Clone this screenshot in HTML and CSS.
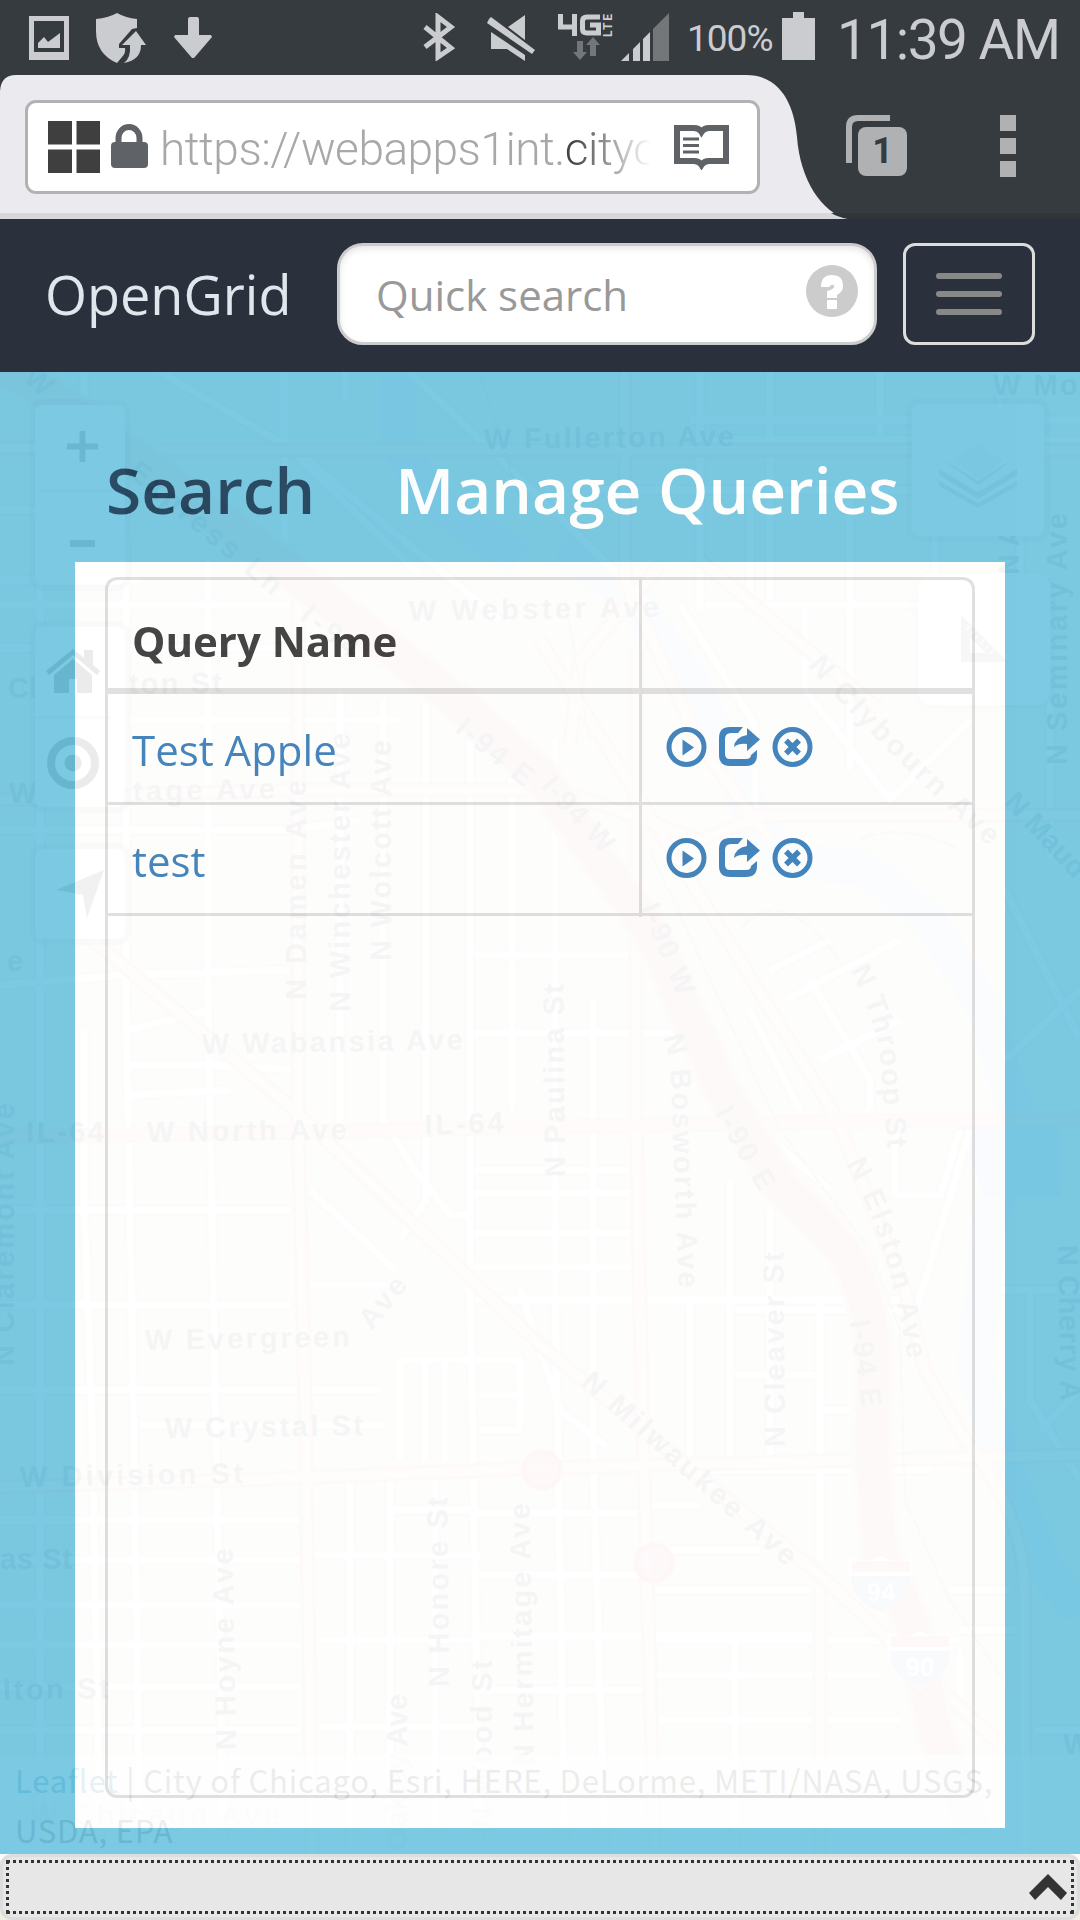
FILE: index.html
```html
<!DOCTYPE html>
<html lang="en">
<head>
<meta charset="utf-8">
<title>OpenGrid</title>
<link rel="stylesheet" href="styles.css">
</head>
<body>
<header class="status">
  <div class="status-left">
    <svg width="40" height="44" viewBox="0 0 40 44" fill="#cacccf"><path fill-rule="evenodd" d="M0 0H40V44H0ZM5 5V36H35V5Z"/><path d="M9 32V27L15 21 19 26 31 17V32Z"/></svg>
    <svg class="shield" width="50" height="50" viewBox="0 0 50 50" fill="#cacccf"><path d="M0 6Q12 5 21 0 30 5 41 6V15L36 16 23 31V35H29Q30 40 26 44L21 50Q0 41 0 18Z"/><path d="M40 18 50 32H45Q45 47 28 50 35 45 34 32H26Z"/></svg>
    <svg class="down" width="38" height="42" viewBox="0 0 38 42" fill="#cacccf"><path d="M16 0H23Q25 0 25 3V18H37L38 20 20 41H18L0 20 1 18H14V3Q14 0 16 0Z"/></svg>
  </div>
  <div class="status-right">
    <svg width="33" height="48" viewBox="0 0 33 48" fill="none" stroke="#cacccf" stroke-width="5"><path d="M2 14 28 35 15 44V4L28 14 2 34"/></svg>
    <svg class="mute" width="48" height="46" viewBox="0 0 48 46" fill="#cacccf"><path d="M2 4 4 2 48 35 45 39 0 8ZM38 0V25L21 12ZM4 17 38 40V46L20 34H4Z"/></svg>
    <svg class="lte" width="55" height="48" viewBox="0 0 55 48"><path fill="none" stroke="#cacccf" stroke-width="5" d="M2.500 1V14H17M16.500 1V23M42 4H29Q24.500 4 24.500 8V16Q24.500 20 29 20H40.500V12H32"/><text class="lte-text" transform="translate(54 24) rotate(-90)" textLength="23">LTE</text><path fill="#73777a" d="M19 28H25V39H29L22 47 15 39H19ZM32 43H38V32H42L35 24 28 32H32Z"/></svg>
    <svg class="signal" width="49" height="48" viewBox="0 0 49 48"><path fill="#cacccf" d="M0 48 8 40V48ZM12 36 19 29V48H12ZM22 26 29 19V48H22Z"/><path fill="#73777a" d="M32 16 48 0V48H32Z"/></svg>
    <span class="percent">100%</span>
    <svg class="battery" width="33" height="48" viewBox="0 0 33 48" fill="#cacccf"><path d="M11 0H22V6H33V48H0V6H11Z"/></svg>
    <time>11:39 AM</time>
  </div>
</header>
<div class="browser">
  <svg class="tab-shape" width="1080" height="144" viewBox="0 0 1080 144"><path fill="#ebeaef" d="M0 16Q1 0 16 0H746C785 0 795 38 797 62C800 105 822 138 848 144H0Z"/><path fill="#d8d7dc" d="M0 138H831Q838 142 848 144H0Z"/><path fill="#30353a" d="M831 138H1080V144H848Q838 142 831 138Z"/></svg>
  <div class="url">
    <svg width="52" height="52" viewBox="0 0 52 52" fill="#3f3f3f"><path d="M0 0H24V23.500H0ZM28.500 0H52V23.500H28.500ZM0 28.500H24V52H0ZM28.500 28.500H52V52H28.500Z"/></svg>
    <svg class="lock" width="37" height="44" viewBox="0 0 37 44"><rect y="18" width="37" height="26" rx="4" fill="#5f6368"/><path d="M7.500 20V14A10.500 11 0 0 1 28.500 14V20" fill="none" stroke="#5f6368" stroke-width="6"/></svg>
    <div class="address">https://webapps1int.<span>cityc</span></div>
    <svg width="55" height="45" viewBox="0 0 55 45"><path d="M3 3H20Q25 3 27.500 7 30 3 35 3H52V36H35Q30 36 27.500 40 25 36 20 36H3Z" fill="none" stroke="#5f6368" stroke-width="6"/><path d="M9 14H25M9 20.500H25M9 27H25" stroke="#5f6368" stroke-width="3"/></svg>
  </div>
  <div class="tabs"><svg width="61" height="61" viewBox="0 0 61 61"><path d="M3 48V12Q3 3 12 3H44" fill="none" stroke="#afb1b3" stroke-width="6"/><rect x="12" y="12" width="49" height="49" rx="8" fill="#afb1b3"/></svg><span>1</span></div>
  <div class="dots"><i></i><i></i><i></i></div>
</div>
<nav class="navbar">
  <div class="brand">OpenGrid</div>
  <div class="search"><span>Quick search</span><svg width="52" height="52" viewBox="0 0 52 52"><circle cx="26" cy="26" r="26" fill="#ccc"/><path d="M15 22Q15 10 26 10 37 10 37 21 37 27 31 30V33H21V26Q29 24 28 20.500 27 19 24 21L23 22ZM22 35H30Q31 35 31 36V43Q31 44 30 44H22Q21 44 21 43V36Q21 35 22 35Z" fill="#fff"/></svg></div>
  <button class="toggle" aria-label="Menu"><i></i><i></i><i></i></button>
</nav>
<main>
  <svg class="map" width="1080" height="1548" viewBox="0 372 1080 1548">
    <defs>
      <path id="streets" d="M40 372V1855M84 372V530M84 1030V1200L92 1420 100 1855M126 540V1000L132 1320 140 1855M208 560V1000L215 1380 224 1855M340 690V1120M383 700V1120L415 1170 450 1215H472M426 690V1200L400 1240M470 700V1280L480 1855M512 720V1110M555 740V1290L565 1855M593 1000V1460L605 1855M285 372V560M285 445 420 575M283 372V440L500 620M160 372 285 445M345 372V400M410 372 650 605M700 372V610M770 372V600M690 420H1080M700 372V440H1080M880 372V455M935 455V620M590 490H920M705 605H1000M700 500V605M750 500V605M850 500V770M805 605V690L890 800 970 720M680 605 755 725V810M0 510H120M0 580H140M0 605H290M0 648H280M128 720H400M0 830H290L360 820M0 985 125 975 290 970M130 1030 210 1010M130 1065H210L300 1070M130 1095 230 1090M0 1210H290M0 1305H290M0 1390H380M140 1425H385M0 1520H300M0 1560H300M0 1605H300M0 1645H300M0 1687H300M0 1730H300M310 1190 395 1270M310 1285H385M400 1360H520V1430M400 1360V1460M425 1360V1460M445 1360V1460M480 1395H520M480 1430H520M350 1480V1855M390 1480V1855M435 1480V1855M390 1510H475M310 1555H480M320 1640H480M320 1727H475M470 1130V1280M475 1170H630M475 1193H630M475 1233H630M475 1267H630M475 1300H900M475 1470H930M475 1513H640M475 1575H640M475 1636H820M475 1690H645M650 1505H700M650 1550H760M650 1590H810M650 1640H960M650 1675H880M650 1720H900M735 1640V1855M690 1300V1460M730 1180V1460M770 1210V1460M820 1300V1560M475 1033H690M475 955H630M520 1290 560 1410 605 1445M735 1375H815M820 1410H850M735 1310H900M770 970 830 940M785 1000 900 940M820 1060 900 1020M750 1010 800 1110M810 980 870 1080V1110M895 1130V1195H940L960 1130M970 1130 910 1330M830 1190 760 1130M1000 372V460M1020 460V640M1050 700V860M1005 890 1080 1040M1005 1060 1080 990M1000 1290H1080M1030 1290V1400L1080 1480M1040 1430 1080 1390M900 1600 940 1640M950 1590H1010M960 1630H1015M960 1650V1700M1035 1730H1080"/>
      <path id="arterials" d="M0 448H120M160 450H1080M0 800 290 790H560L700 840 765 815H1080M0 1137 300 1132 540 1127 1080 1118M0 1487 240 1480 540 1468 1080 1455M298 560 298 1120 305 1400 312 1855M636 650V1120L642 1400 655 1855M75 925 300 1115 540 1345 820 1575 1000 1745M660 565 580 660 570 745M540 640 740 960 835 1115 865 1190 905 1290 925 1370 965 1440Q1025 1510 1025 1600V1855M625 372V580L700 745 770 840M700 560 880 710M820 1590V1855M0 372 280 575"/>
      <path id="freeway" d="M0 360 130 455 280 565 447 693 540 775 585 840 650 930 722 1090 780 1185 840 1245Q876 1300 874 1380L872 1460 880 1550 912 1623 936 1735 975 1830"/>
    </defs>
    <rect y="372" width="1080" height="1548" fill="#f3efe0"/>
    <g fill="#ebf0d8"><path d="M92 1255H120V1310H92ZM242 1310H295V1350H242ZM310 1280 350 1240 385 1275ZM398 1480H430V1535H398ZM600 1040H635V1100H600ZM572 1640H640V1680H572ZM735 1200H765V1280H735ZM830 1720H900V1765H830ZM145 1630H200V1645H145ZM735 1345H810V1370H735Z"/></g>
    <g fill="none" stroke="#d6e1f8" stroke-width="36" stroke-linejoin="round"><path d="M398 372V440L430 500 520 560"/><path d="M560 550 630 595 690 680 740 790 780 860 865 868 930 920 985 1010 1015 1110 1000 1180 988 1230 975 1370 1005 1470 1045 1570 1080 1610"/><path stroke="none" fill="#cfdcf6" d="M955 1122H1060V1197H985Z"/></g>
    <use href="#streets" fill="none" stroke="#e3e1d8" stroke-width="12"/>
    <use href="#streets" fill="none" stroke="#fff" stroke-width="7"/>
    <use href="#arterials" fill="none" stroke="#f0cfc4" stroke-width="15"/>
    <use href="#arterials" fill="none" stroke="#fbf3ea" stroke-width="9"/>
    <path d="M0 1137 300 1132 540 1127 1080 1118" fill="none" stroke="#f9d8d0" stroke-width="12"/>
    <use href="#freeway" fill="none" stroke="#f5e0d8" stroke-width="42"/>
    <use href="#freeway" fill="none" stroke="#f2c9be" stroke-width="33"/>
    <path d="M650 850 710 980 780 1130 870 1250 900 1330 905 1500 950 1600 1010 1690M860 840Q900 820 960 850M740 930Q780 880 840 960M480 372 520 500M565 600 590 740M660 930 720 1040" fill="none" stroke="#d3d2cc" stroke-width="2" stroke-dasharray="18 3"/>
    <g class="labels">
      <text x="0" y="0" transform="translate(22 380) rotate(40)">W</text>
      <text transform="translate(484 449) rotate(-.7)" textLength="250">W Fullerton Ave</text>
      <text x="993" y="395" textLength="135">W Monta</text>
      <text transform="translate(409 621) rotate(-1)" textLength="250">W Webster Ave</text>
      <text x="8" y="698">Cl</text><text transform="translate(129 694) rotate(-1)" textLength="93">ton St</text>
      <text x="9" y="803">W</text><text transform="translate(133 801) rotate(-1)" textLength="142">tage Ave</text>
      <text transform="translate(306 1000) rotate(-90)" textLength="220">N Damen Ave</text>
      <text transform="translate(350 1012) rotate(-90)" textLength="279">N Winchester Ave</text>
      <text transform="translate(391 961) rotate(-90)" textLength="221">N Wolcott Ave</text>
      <text transform="translate(202 1054) rotate(-1)" textLength="261">W Wabansia Ave</text>
      <text x="26" y="1142" textLength="78">IL-64</text>
      <text transform="translate(147 1142) rotate(-.8)" textLength="200">W North Ave</text>
      <text transform="translate(425 1135) rotate(-2)" textLength="79">IL-64</text>
      <text transform="translate(372 1331) rotate(-51)" textLength="58">Ave</text>
      <text transform="translate(145 1350) rotate(-1)" textLength="205">W Evergreen</text>
      <text transform="translate(165 1438) rotate(-.8)" textLength="198">W Crystal St</text>
      <text transform="translate(20 1487) rotate(-1)" textLength="223">W Division St</text>
      <text x="0" y="1569" textLength="72">as St</text><text transform="translate(3 1700) rotate(-1)" textLength="106">lton St</text>
      <text transform="translate(236 1750) rotate(-91)" textLength="202">N Hoyne Ave</text>
      <text transform="translate(449 1687) rotate(-90.500)" textLength="190">N Honore St</text>
      <text transform="translate(534 1765) rotate(-91)" textLength="262">N Hermitage Ave</text>
      <text transform="translate(492 1828) rotate(-90)" textLength="168">N Wood St</text>
      <text transform="translate(407 1850) rotate(-90)" textLength="156">Oakley Ave</text>
      <text transform="translate(785 1447) rotate(-90.500)" textLength="195">N Cleaver St</text>
      <text transform="translate(565 1177) rotate(-90.500)" textLength="193">N Paulina St</text>
      <text transform="translate(14 1366) rotate(-90)" textLength="263">N Claremont Ave</text>
      <path id="bosworth" d="M663 1037Q672 1060 672 1110L679 1290" fill="none"/><text><textPath href="#bosworth" textLength="252">N Bosworth Ave</textPath></text>
      <path id="throop" d="M850 970Q882 1030 882 1085L888 1152" fill="none"/><text><textPath href="#throop" textLength="184">N Throop St</textPath></text>
      <path id="elston" d="M846 1164Q888 1235 908 1362" fill="none"/><text><textPath href="#elston" textLength="206">N Elston Ave</textPath></text>
      <path id="milwaukee" d="M580 1384 790 1570" fill="none"/><text><textPath href="#milwaukee" textLength="276">N Milwaukee Ave</textPath></text>
      <path id="clybourn" d="M808 666Q870 738 992 849" fill="none"/><text><textPath href="#clybourn" textLength="256">N Clybourn Ave</textPath></text>
      <text transform="translate(1003 803) rotate(47)">N Maud Ave</text>
      <text transform="translate(1067 765) rotate(-90)" textLength="252">N Seminary Ave</text>
      <text transform="translate(1019 575) rotate(-90)">N A</text>
      <text transform="translate(1058 1245) rotate(89)" textLength="156">N Cherry A</text>
      <text transform="translate(299 618) rotate(39)" textLength="65">I-94</text>
      <text transform="translate(454 731) rotate(39)" textLength="90">I-94 E</text>
      <text transform="translate(540 787) rotate(47)" textLength="92">I-94 W</text>
      <text transform="translate(640 908) rotate(67)" textLength="97">I-90 W</text>
      <text transform="translate(714 1113) rotate(60)" textLength="92">I-90 E</text>
      <text transform="translate(850 1321) rotate(82)" textLength="88">I-94 E</text>
      <text transform="translate(127 474) rotate(40)" textLength="190">Express Ln</text>
      <text x="7" y="971">e</text><text x="1063" y="1754">W</text>
      <text class="faint" x="30" y="1825" textLength="250">W Chicago Ave</text>
    </g>
    <g fill="#ffb8c4" fill-opacity=".8" stroke="#ffa8b8" stroke-width="5"><circle cx="542" cy="1470" r="18"/><circle cx="654" cy="1563" r="18"/></g>
    <g id="shield94"><path d="M849 1557Q866 1565 881 1556 897 1565 911 1557Q920 1593 881 1615 842 1593 849 1557Z" fill="#fff"/><path d="M852 1561H910V1572H852Z" fill="#f9b9bd"/><path d="M851 1576H911Q912 1600 881 1613 850 1600 851 1576Z" fill="#b9cde6"/></g>
    <use href="#shield94" x="39" y="75"/>
    <g class="route"><text x="881" y="1601">94</text><text x="920" y="1676">90</text></g>
  </svg>
  <div class="control zoom-control"><span><svg width="31" height="31"><path d="M15.500 0V31M0 15.500H31" stroke="#444" stroke-width="6"/></svg></span><span><svg width="25" height="7"><path d="M0 3.500H25" stroke="#444" stroke-width="7"/></svg></span></div>
  <div class="control home-control"><span><svg width="54" height="44" viewBox="0 0 54 44" fill="#333"><path d="M0 22 27 0 38 9V1H47V16L54 22 51 26 27 6 3 26Z"/><path d="M8 26 27 10 46 26V44H31V30H23V44H8Z"/></svg></span><span><svg width="52" height="52"><circle cx="26" cy="26" r="22" fill="none" stroke="#333" stroke-width="8"/><circle cx="26" cy="26" r="8.500" fill="#333"/></svg></span></div>
  <div class="control locate-control"><svg width="48" height="48" viewBox="0 0 48 48"><path d="M0 20 48 0 31 48 27 25Z" fill="#777"/></svg></div>
  <div class="control layers-control"><svg width="78" height="76" viewBox="0 0 78 76" fill="#b5b5b5"><path d="M0 49 39 71 78 49 78 54 39 76 0 54Z"/><path d="M0 37 39 60 78 37V43L39 67 0 43Z"/><path d="M0 25 39 49 78 25 39 53Z"/><path d="M14 28 39 12 64 28 39 47Z" fill="#e7e7e7"/></svg></div>
  <div class="control measure-control"><svg width="47" height="47" viewBox="0 0 47 47"><path fill="#b5b5b5" fill-rule="evenodd" d="M0 0 47 47H0ZM9 22V38H25Z"/><path d="M5 15 9 11M9 20 14 16M14 24 18 20M19 29 23 25M24 34 28 30M29 39 33 35" stroke="#fff" stroke-width="1.500"/></svg></div>
  <div class="attribution"><span class="first"><a>Leaflet</a> | City of Chicago, Esri, HERE, DeLorme, METI/NASA, USGS,</span><span class="second">USDA, EPA</span></div>
  <section class="overlay">
    <div class="headings"><span class="search-tab">Search</span><span class="manage-tab">Manage Queries</span></div>
    <div class="panel">
      <div class="grid">
        <div class="row head"><div>Query Name</div><div></div></div>
        <div class="row"><div>Test Apple</div><div class="actions">
          <svg width="41" height="40" viewBox="0 0 41 40"><circle cx="20.500" cy="20" r="17.500" fill="none" stroke="#337ab7" stroke-width="5"/><path d="M16.500 12.500 28 20.500 16.500 28.500Z" fill="#337ab7"/></svg>
          <svg width="41" height="39" viewBox="0 0 41 39" fill="#337ab7"><path d="M24 0 19 6H12Q6 6 6 12V27Q6 32 11 32H27Q32 32 32 28L38 23V28Q38 39 27 39H11Q0 39 0 28V11Q0 0 11 0Z"/><path d="M28 1 41 12.500 28 24V17Q20 16 15 20 16 10 28 8Z"/></svg>
          <svg width="41" height="40" viewBox="0 0 41 40" fill="none" stroke="#337ab7"><circle cx="20.500" cy="20" r="17.500" stroke-width="5"/><path d="M14 13.500 27 26.500M27 13.500 14 26.500" stroke-width="5.500"/></svg>
        </div></div>
        <div class="row"><div>test</div><div class="actions">
          <svg width="41" height="40" viewBox="0 0 41 40"><circle cx="20.500" cy="20" r="17.500" fill="none" stroke="#337ab7" stroke-width="5"/><path d="M16.500 12.500 28 20.500 16.500 28.500Z" fill="#337ab7"/></svg>
          <svg width="41" height="39" viewBox="0 0 41 39" fill="#337ab7"><path d="M24 0 19 6H12Q6 6 6 12V27Q6 32 11 32H27Q32 32 32 28L38 23V28Q38 39 27 39H11Q0 39 0 28V11Q0 0 11 0Z"/><path d="M28 1 41 12.500 28 24V17Q20 16 15 20 16 10 28 8Z"/></svg>
          <svg width="41" height="40" viewBox="0 0 41 40" fill="none" stroke="#337ab7"><circle cx="20.500" cy="20" r="17.500" stroke-width="5"/><path d="M14 13.500 27 26.500M27 13.500 14 26.500" stroke-width="5.500"/></svg>
        </div></div>
      </div>
    </div>
  </section>
  <footer class="drawer"><div><svg width="38" height="26" viewBox="0 0 38 26"><path d="M19 0 38 19 32 26 19 13 6 26 0 19Z" fill="#333"/></svg></div></footer>
</main>
</body>
</html>
```
FILE: styles.css
```css
* { box-sizing: border-box; }
body { margin: 0; width: 1080px; height: 1920px; overflow: hidden; display: flex; flex-direction: column; font-family: "Open Sans", "Noto Sans", sans-serif; }
svg { display: block; flex: none; }
span, time, .address { white-space: nowrap; }

.status { height: 75px; flex: none; background: #363b3f; color: #cacccf; font-family: Roboto, sans-serif; display: flex; justify-content: space-between; padding: 12px 21px 0 29px; }
.status-left, .status-right { display: flex; align-items: flex-start; }
.status-left { padding-top: 4px; }
.shield { margin: -3px 28px 0 27px; }
.down { margin-top: 1px; }
.status-right svg { margin-top: 1px; }
.status-right .mute { margin: 3px 23px 0 31px; }
.status-right .signal { margin-left: 8px; }
.lte-text { font: bold 12px Roboto, sans-serif; fill: #cacccf; }
.percent { font-size: 37px; line-height: 54px; width: 84px; margin-left: 17px; margin-right: 1px; letter-spacing: -1px; }
.status-right .battery { margin: 0 22px 0 10px; }
time { font-size: 55px; line-height: 56px; width: 222px; letter-spacing: -1.500px; }

.browser { height: 144px; flex: none; background: #363b3f; position: relative; display: flex; align-items: flex-start; padding: 25px 0 0 25px; }
.tab-shape { position: absolute; inset: 0; }
.url { position: relative; width: 735px; height: 94px; border: 3px solid #b2b2b2; border-radius: 11px; background: #fff; display: flex; align-items: center; padding: 0 28px 0 20px; }
.lock { margin: -3px 0 0 11px; }
.address { font: 300 46px/60px Roboto, sans-serif; letter-spacing: -.5px; width: 491px; margin-left: 12px; margin-top: 3px; margin-right: 23px; overflow: hidden; color: #a8a8a8; -webkit-mask-image: linear-gradient(90deg, #000 84%, transparent); mask-image: linear-gradient(90deg, #000 84%, transparent); }
.address span { color: #444; }
.tabs { position: relative; margin: 15px 0 0 86px; }
.tabs span { position: absolute; left: 12px; top: 12px; width: 49px; text-align: center; font: bold 36px/49px Roboto, sans-serif; color: #363b3f; }
.dots { position: relative; display: flex; flex-direction: column; gap: 7px; margin: 15px 0 0 93px; }
.dots i { width: 16px; height: 16px; background: #afb1b3; }

.navbar { height: 153px; flex: none; background: #2b313c; display: flex; padding: 24px 45px 0 45px; }
.brand { width: 292px; font-size: 54px; line-height: 102px; color: #dfe6ec; }
.search { width: 540px; height: 102px; border: 3px solid #ccc; border-radius: 26px; background: #fff; box-shadow: inset 0 3px 6px rgba(0,0,0,.1); display: flex; justify-content: space-between; padding: 19px 16px 0 36px; color: #999; font-size: 42px; line-height: 59px; }
.toggle { margin-left: auto; width: 132px; height: 102px; border: 3px solid #ddd; border-radius: 12px; background: none; padding: 0; display: flex; flex-direction: column; justify-content: center; align-items: center; gap: 12px; }
.toggle i { width: 66px; height: 6px; border-radius: 3px; background: #888; }

main { position: relative; flex: 1; display: flex; flex-direction: column; }
.map { position: absolute; inset: 0; }
.labels { font: bold 29px "Liberation Sans", sans-serif; fill: #9da1a8; }
.labels .faint { fill: #b5b8be; }
.route { font: bold 26px "Liberation Sans", sans-serif; fill: #fff; text-anchor: middle; }
.control { position: absolute; background: #fff; border: 6px solid rgba(0,0,0,.12); background-clip: padding-box; border-radius: 14px; display: flex; flex-direction: column; align-items: center; justify-content: center; }
.control span { flex: 1; width: 100%; display: flex; align-items: center; justify-content: center; }
.control span + span { border-top: 3px solid #ddd; }
.zoom-control { left: 29px; top: 27px; width: 102px; height: 192px; padding-left: 5px; }
.zoom-control span + span { padding-top: 10px; }
.home-control { left: 29px; top: 249px; width: 102px; height: 192px; padding-right: 15px; }
.locate-control { left: 29px; top: 471px; width: 102px; height: 102px; }
.layers-control { left: 906px; top: 26px; width: 144px; height: 144px; }
.measure-control { left: 918px; top: 201px; width: 132px; height: 132px; padding-bottom: 2px; border: 0; box-shadow: 0 3px 12px rgba(0,0,0,.15); }
.attribution { position: absolute; left: 0; right: 0; top: 1383px; height: 105px; background: rgba(255,255,255,.7); padding: 0 15px; font: 31px/50px "Noto Sans CJK SC", "Noto Sans CJK JP", sans-serif; color: #444; display: flex; flex-direction: column; }
.attribution a { color: #0078a8; }
.first, .second { letter-spacing: .8px; }

.overlay { position: relative; flex: 1; background: #6ec4e0; opacity: .9; padding: 0 75px 26px; display: flex; flex-direction: column; }
.headings { height: 190px; display: flex; gap: 80px; padding: 71px 0 0 31px; font-size: 64px; line-height: 94px; font-weight: 600; }
.search-tab { color: #153954; }
.manage-tab { color: #fff; }
.panel { flex: 1; background: #fff; padding: 15px 30px 30px; }
.grid { height: 100%; border: 3px solid #ddd; border-radius: 12px; color: #337ab7; font-size: 42px; line-height: 60px; }
.row { display: grid; grid-template-columns: 534px 1fr; height: 111px; border-bottom: 3px solid #ddd; }
.row > div { padding: 26px 24px; }
.row > div:first-child { border-right: 3px solid #ddd; }
.head { height: 114px; border-bottom-width: 6px; color: #333; font-weight: 700; }
.head > div:first-child { padding-top: 31px; }
.row .actions { display: flex; gap: 12px; padding-top: 33px; }

.drawer { position: relative; height: 66px; flex: none; border: 3px solid #ddd; border-radius: 12px; background: #e7e7e7; padding: 3px; }
.drawer::before { content: ""; position: absolute; z-index: -1; inset: -3px; background: #7dcae3; }
.drawer div { height: 54px; border: 3px dotted #333; display: flex; justify-content: flex-end; align-items: center; padding-right: 4px; }
```
